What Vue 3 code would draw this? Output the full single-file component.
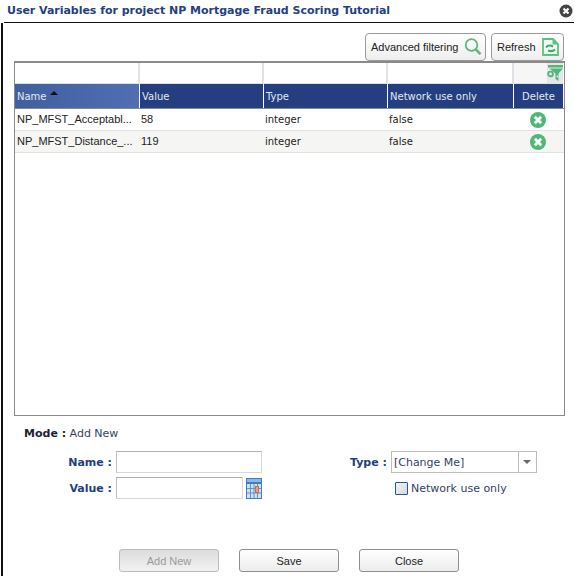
<script setup>
const columns = [
  { label: 'Name', key: 'name', active: true },
  { label: 'Value', key: 'value' },
  { label: 'Type', key: 'type' },
  { label: 'Network use only', key: 'network' }
]

const rows = [
  { name: 'NP_MFST_Acceptabl...', value: '58', type: 'integer', network: 'false' },
  { name: 'NP_MFST_Distance_...', value: '119', type: 'integer', network: 'false' }
]
</script>

<template>
  <div class="dialog">
    <div class="title-bar">
      <span class="title">User Variables for project NP Mortgage Fraud Scoring Tutorial</span>
      <svg class="close-icon" width="14" height="14" viewBox="0 0 14 14">
        <circle cx="7" cy="7" r="6.5" fill="#444" />
        <path d="M4.5 4.5l5 5M9.5 4.5l-5 5" stroke="#fff" stroke-width="2.2" />
      </svg>
    </div>

    <div class="content">
      <div class="toolbar">
        <button class="tool-btn filter-btn">
          <span>Advanced filtering</span>
          <svg width="18" height="20" viewBox="0 0 18 20">
            <circle cx="7.500" cy="8" r="5.800" fill="none" stroke="#5cb87e" stroke-width="1.800" />
            <path d="M11.500 12.200l5 5" stroke="#5cb87e" stroke-width="2.400" />
          </svg>
        </button>
        <button class="tool-btn refresh-btn">
          <span>Refresh</span>
          <svg width="17" height="18" viewBox="0 0 17 18">
            <path d="M1 1h10l5 5v11H1z" fill="#f2faf5" stroke="#5cc081" stroke-width="1.800" />
            <path d="M10.500 1v5.500h5.500z" fill="#5cc081" />
            <path d="M4 9.500c1.500-2 4.500-2.200 7-1M13 11.500c-2 1.800-5 1.800-7 .8" fill="none" stroke="#3ba866" stroke-width="2" />
          </svg>
        </button>
      </div>

      <div class="grid-box">
        <div class="filter-row">
          <div v-for="col in columns" :key="col.key" class="filter-cell"></div>
          <div class="funnel-cell">
            <svg width="16" height="20" viewBox="0 0 16 20">
              <rect width="16" height="20" fill="#e6e6e6" />
              <path d="M1 2h15v2.500H1zM2.500 5.500h13.500l-4.500 5v7.500l-3-2v-5.500z" fill="#4fb878" />
              <circle cx="3.500" cy="11" r="2.400" fill="none" stroke="#4fb878" stroke-width="1.900" />
              <circle cx="10.500" cy="13.500" r="1" fill="#e6e6e6" />
            </svg>
          </div>
        </div>
        <div class="head-row">
          <div v-for="col in columns" :key="col.key" class="head-cell" :class="{ active: col.active }">
            {{ col.label }}<span v-if="col.active" class="sort-arrow"></span>
          </div>
          <div class="head-cell delete-head">Delete</div>
        </div>
        <div v-for="(row, i) in rows" :key="row.name" class="data-row" :class="{ alt: i % 2 === 1 }">
          <div class="data-cell name-cell">{{ row.name }}</div>
          <div class="data-cell arial">{{ row.value }}</div>
          <div class="data-cell">{{ row.type }}</div>
          <div class="data-cell">{{ row.network }}</div>
          <div class="data-cell delete-cell">
            <svg width="16" height="16" viewBox="0 0 16 16">
              <circle cx="8" cy="8" r="8" fill="#4fb878" />
              <path d="M4.800 4.800l6.400 6.400M11.200 4.800l-6.400 6.400" stroke="#fff" stroke-width="2.800" />
            </svg>
          </div>
        </div>
      </div>

      <div class="mode"><b>Mode :</b> <span>Add New</span></div>

      <div class="form">
        <div class="form-col left-col">
          <div class="field">
            <label>Name :</label>
            <div class="input name-input"></div>
          </div>
          <div class="field">
            <label>Value :</label>
            <div class="input value-input"></div>
            <svg class="calendar" width="16" height="21" viewBox="0 0 16 21">
              <rect width="16" height="21" fill="#3f7fc0" />
              <rect x="1" y="1" width="14" height="3" fill="#8fb8e0" />
              <path d="M1 6h14v14H1z" fill="#cfe0f2" />
              <path d="M4.500 6v14M8 6v14M11.500 6v14M1 10.500h14M1 15h14" stroke="#5d94cc" />
              <rect x="9.500" y="8.500" width="3" height="6" fill="#e4a08a" stroke="#d8683f" />
            </svg>
          </div>
        </div>
        <div class="form-col right-col">
          <div class="field">
            <label>Type :</label>
            <div class="select">
              <span class="select-text">[Change Me]</span>
              <span class="select-arrow"><i></i></span>
            </div>
          </div>
          <div class="check-row">
            <span class="checkbox"></span>
            <span>Network use only</span>
          </div>
        </div>
      </div>

      <div class="actions">
        <button class="action-btn disabled">Add New</button>
        <button class="action-btn">Save</button>
        <button class="action-btn">Close</button>
      </div>
    </div>
  </div>
</template>

<style>
body {
  background: #fff;
}
</style>

<style scoped>
.dialog {
  width: 575px;
  height: 576px;
  box-sizing: border-box;
  overflow: hidden;
  font-family: "DejaVu Sans", sans-serif;
  font-size: 11px;
  color: #222;
}

.title-bar {
  height: 23px;
  box-sizing: border-box;
  margin-left: 4px;
  margin-right: 1px;
  border-bottom: 1px solid #111;
  display: flex;
  align-items: center;
  justify-content: space-between;
  padding: 0 1px 2px 3px;
}

.title {
  font-weight: bold;
  font-size: 11px;
  letter-spacing: -0.03px;
  color: #24407f;
}

.close-icon {
  margin-top: 1px;
}

.content {
  margin-left: 1px;
  border-left: 2px solid #111;
  height: 553px;
  box-sizing: border-box;
  padding: 10px 0 0 11px;
}

.toolbar {
  width: 550px;
  height: 28px;
  display: flex;
  justify-content: flex-end;
  gap: 5px;
}

.tool-btn {
  height: 28px;
  box-sizing: border-box;
  border: 1px solid #9a9a9a;
  border-radius: 4px;
  background: linear-gradient(#fff, #eee);
  font-family: "Liberation Sans", sans-serif;
  font-size: 11px;
  color: #222;
  display: flex;
  align-items: center;
  padding: 0;
  white-space: nowrap;
}

.filter-btn {
  width: 121px;
  padding-left: 5px;
  gap: 6px;
}

.refresh-btn {
  width: 73px;
  padding-left: 5px;
  gap: 6px;
}

.grid-box {
  width: 551px;
  height: 355px;
  box-sizing: border-box;
  border: 1px solid #8a8a8a;
  border-top-width: 2px;
  background: #fff;
}

.filter-row,
.head-row,
.data-row {
  display: grid;
  grid-template-columns: 125px 124px 124px 126px 49px;
}

.filter-row {
  height: 20px;
  border-bottom: 1px solid #dfe1e6;
}

.filter-cell {
  border-right: 2px solid #dfe1e6;
}

.funnel-cell {
  background: #f6f6f6;
  display: flex;
  justify-content: flex-end;
  align-items: flex-start;
  overflow: hidden;
}

.head-row {
  height: 25px;
  border-bottom: 1px solid #8a8a8a;
  box-sizing: border-box;
}

.head-cell {
  background: #233f80;
  color: #e4e8f2;
  font-size: 10px;
  border-right: 1px solid #fff;
  padding-left: 2px;
  display: flex;
  align-items: center;
  box-sizing: border-box;
}

.head-cell.active {
  background: linear-gradient(90deg, #3f5f9f, #4f6fb0);
  position: relative;
}

.sort-arrow {
  position: absolute;
  left: 35px;
  top: 7px;
  border-left: 4px solid transparent;
  border-right: 4px solid transparent;
  border-bottom: 4px solid #111;
}

.delete-head {
  justify-content: center;
  padding-left: 0;
  border-right: none;
}

.data-row {
  height: 22px;
  box-sizing: border-box;
  border-bottom: 1px solid #e2e2e2;
}

.data-row.alt {
  background: #f5f5f3;
}

.data-cell {
  font-size: 10px;
  line-height: 21px;
  padding-left: 1px;
  color: #222;
  white-space: nowrap;
  overflow: hidden;
}

.name-cell,
.arial {
  font-family: "Liberation Sans", sans-serif;
  font-size: 11px;
  padding-left: 2px;
}

.arial {
  padding-left: 1px;
}

.delete-cell {
  display: flex;
  justify-content: center;
  align-items: center;
  padding: 0 1px 0 0;
}

.mode {
  margin: 11px 0 0 10px;
  font-size: 11px;
  line-height: 14px;
  color: #33425f;
}

.mode b {
  color: #1a1f33;
}

.form {
  display: flex;
  margin-top: 10px;
}

.form-col {
  display: flex;
  flex-direction: column;
  gap: 4px;
}

.left-col {
  width: 249px;
  flex-shrink: 0;
}

.right-col {
  padding-left: 87px;
}

.field {
  display: flex;
  align-items: center;
  height: 22px;
}

.left-col label {
  width: 98px;
  text-align: right;
}

.field label {
  font-weight: bold;
  color: #24407f;
  margin-right: 4px;
}

.input {
  height: 22px;
  box-sizing: border-box;
  border: 1px solid #d8d8d8;
  border-top-color: #b0b0b0;
  border-left-color: #c0c0c0;
  background: #fff;
}

.name-input {
  width: 146px;
}

.value-input {
  width: 127px;
}

.calendar {
  margin-left: 3px;
  flex-shrink: 0;
}

.select {
  width: 146px;
  height: 22px;
  box-sizing: border-box;
  border: 1px solid #bdbdbd;
  display: flex;
  align-items: center;
  justify-content: space-between;
}

.select-text {
  padding-left: 2px;
  color: #33425f;
}

.select-arrow {
  width: 17px;
  height: 100%;
  border-left: 1px solid #bdbdbd;
  display: flex;
  align-items: center;
  justify-content: center;
}

.select-arrow i {
  border-left: 4px solid transparent;
  border-right: 4px solid transparent;
  border-top: 4px solid #666;
}

.check-row {
  display: flex;
  align-items: center;
  height: 22px;
  padding-left: 45px;
  gap: 3px;
  color: #33425f;
}

.checkbox {
  width: 11px;
  height: 11px;
  border-radius: 1px;
  border: 1px solid #235a8f;
  background: linear-gradient(135deg, #f4f4f4, #d8d8d8);
  flex-shrink: 0;
}

.actions {
  display: flex;
  gap: 20px;
  margin-top: 50px;
  padding-left: 105px;
}

.action-btn {
  width: 100px;
  height: 23px;
  box-sizing: border-box;
  border: 1px solid #8f8f8f;
  border-radius: 3px;
  background: linear-gradient(#fff, #ececec);
  font-family: "Liberation Sans", sans-serif;
  font-size: 11px;
  color: #222;
  padding: 0;
}

.action-btn.disabled {
  border-color: #bbb;
  background: linear-gradient(#dcdcdc, #f2f2f2);
  color: #9a9a9a;
  font-weight: normal;
}
</style>
